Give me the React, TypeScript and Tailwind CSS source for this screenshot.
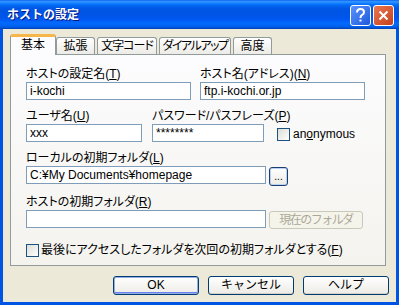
import React from 'react';

const font = "font-[family-name:'Liberation_Sans','Noto_Sans_CJK_JP',sans-serif]";

function Label({ text, keyChar, className = '' }: { text: string; keyChar: string; className?: string }) {
  return (
    <div className={`h-[15px] leading-[15px] text-[12px] text-black whitespace-nowrap [font-feature-settings:'palt'] ${className}`}>
      {text}(<u>{keyChar}</u>)
    </div>
  );
}

function TextBox({ value, w }: { value: string; w: string }) {
  return (
    <div className={`${w} h-[18px] border border-[#7F9DB9] bg-white px-[3px] text-[12px] leading-[16px] text-black whitespace-nowrap overflow-hidden`}>
      {value}
    </div>
  );
}

function CheckBox() {
  return <div className="w-[13px] h-[13px] shrink-0 border border-[#1C5180] bg-gradient-to-br from-[#DCDCD7] to-white" />;
}

function Tab({ label, w, active = false, tight = '' }: { label: string; w: string; active?: boolean; tight?: string }) {
  if (active) {
    return (
      <div className={`relative z-10 ${w} h-[21px] mb-[-1px] rounded-t-[3px] border-x border-[#919B9C] bg-[#FCFCFE] border-t-[3px] border-t-[#F7B64A] flex justify-center whitespace-nowrap leading-[16px]`}>
        {label}
      </div>
    );
  }
  return (
    <div className={`${w} h-[17px] rounded-t-[3px] border border-b-0 border-[#919B9C] bg-gradient-to-b from-white to-[#ECEBE6] flex justify-center whitespace-nowrap leading-[16px] [font-feature-settings:'palt'] ${tight}`}>
      {label}
    </div>
  );
}

function XpButton({ label, isDefault = false }: { label: string; isDefault?: boolean }) {
  return (
    <button
      className={`w-[86px] h-[19px] rounded-[3px] border border-[#003C74] bg-gradient-to-b from-white to-[#ECEBE6] text-[12px] leading-[15px] text-black ${
        isDefault ? 'shadow-[inset_0_0_0_1px_#97AEE2,inset_0_-1px_0_1px_#6982EE]' : 'shadow-[inset_0_-1px_0_#D6D0C5]'
      }`}
    >
      {label}
    </button>
  );
}

export default function App() {
  return (
    <div className={`w-[399px] h-[305px] flex flex-col bg-[#0054E3] ${font}`}>
      {/* タイトルバー */}
      <div className="h-[29px] shrink-0 flex items-center pl-[7px] pr-[5px] bg-[linear-gradient(to_bottom,#0058ee_0%,#3593ff_4%,#288eff_8%,#127dff_12%,#036ffc_16%,#0262ee_22%,#0057e5_30%,#0054e3_40%,#0055eb_60%,#005bf5_70%,#026afe_80%,#0062ef_90%,#0052d6_96%,#0040ab_100%)]">
        <span className="flex-1 text-white font-bold text-[12px] leading-[14px] pt-[1px] [text-shadow:1px_1px_0_#0A1883]">ホストの設定</span>
        <div className="flex gap-[2px] mt-[1px]">
          <div className="w-[21px] h-[21px] rounded-[3px] border border-white bg-gradient-to-br from-[#5A93FF] to-[#1C59DA] flex items-center justify-center">
            <svg width="11" height="15" viewBox="0 0 11 15">
              <path d="M2 4.5 C2 2 3.6 1 5.5 1 C7.6 1 9 2.3 9 4.2 C9 6 7.6 6.6 6.5 7.4 C5.8 7.9 5.5 8.5 5.5 10" fill="none" stroke="white" strokeWidth="2" />
              <rect x="4.5" y="11.5" width="2" height="2" fill="white" />
            </svg>
          </div>
          <div className="w-[21px] h-[21px] rounded-[3px] border border-white bg-gradient-to-br from-[#E9774F] to-[#C3401A] flex items-center justify-center">
            <svg width="11" height="11" viewBox="0 0 11 11">
              <path d="M1.5 1.5 L9.5 9.5 M9.5 1.5 L1.5 9.5" stroke="white" strokeWidth="2" />
            </svg>
          </div>
        </div>
      </div>

      {/* 本体 */}
      <div className="flex-1 mx-[3px] mb-[3px] bg-[#ECE9D8] flex flex-col px-[7px] pt-[5px]">
        {/* タブ */}
        <div className="h-[20px] flex items-end text-[12px] text-black">
          <Tab label="基本" w="w-[46px]" active />
          <Tab label="拡張" w="w-[39px]" />
          <div className="w-[2px]" />
          <Tab label="文字コード" w="w-[60px]" tight="tracking-[-1px]" />
          <div className="w-[2px]" />
          <Tab label="ダイアルアップ" w="w-[72px]" tight="tracking-[-1.5px]" />
          <div className="w-[2px]" />
          <Tab label="高度" w="w-[39px]" />
        </div>

        {/* パネル */}
        <div className="h-[212px] mr-[3px] border border-[#919B9C] bg-gradient-to-b from-[#FCFCFE] to-[#F4F3EE] pl-[15px] pt-[12px] flex flex-col gap-[9px]">
          <div className="flex gap-[9px]">
            <div className="flex flex-col">
              <Label text="ホストの設定名" keyChar="T" />
              <TextBox value="i-kochi" w="w-[165px]" />
            </div>
            <div className="flex flex-col">
              <Label text="ホスト名(アドレス)" keyChar="N" />
              <TextBox value="ftp.i-kochi.or.jp" w="w-[165px]" />
            </div>
          </div>

          <div className="flex">
            <div className="flex flex-col w-[116px]">
              <Label text="ユーザ名" keyChar="U" />
              <TextBox value="xxx" w="w-[116px]" />
            </div>
            <div className="flex flex-col ml-[10px] w-[112px]">
              <Label text="パスワード/パスフレーズ" keyChar="P" />
              <TextBox value="********" w="w-[112px]" />
            </div>
            <div className="self-end ml-[13px] mb-[1px] flex items-center gap-[3px] text-[12px] leading-[13px]">
              <CheckBox />
              <span>
                an<u>o</u>nymous
              </span>
            </div>
          </div>

          <div className="flex flex-col">
            <Label text="ローカルの初期フォルダ" keyChar="L" />
            <div className="flex gap-[3px] items-start">
              <TextBox value="C:¥My Documents¥homepage" w="w-[240px]" />
              <button className="mt-[1px] w-[19px] h-[19px] rounded-[3px] border border-[#1C3F70] bg-gradient-to-b from-white to-[#ECEBE6] shadow-[inset_0_0_0_1px_#B9D1F5] text-[10px] leading-[16px] text-black">
                ...
              </button>
            </div>
          </div>

          <div className="flex flex-col">
            <Label text="ホストの初期フォルダ" keyChar="R" />
            <div className="flex gap-[3px] items-start">
              <TextBox value="" w="w-[240px]" />
              <button className="mt-[1px] w-[94px] h-[18px] rounded-[3px] border border-[#CAC8BB] bg-[#F5F4EA] text-[12px] leading-[15px] text-[#ACA899] tracking-[-1.5px]">
                現在のフォルダ
              </button>
            </div>
          </div>

          <div className="mt-[5px] flex items-center gap-[2px] text-[12px] leading-[14px] [font-feature-settings:'palt']">
            <CheckBox />
            <span>
              最後にアクセスしたフォルダを次回の初期フォルダとする(<u>F</u>)
            </span>
          </div>
        </div>

        {/* ボタン */}
        <div className="mt-[10px] flex justify-end gap-[9px]">
          <XpButton label="OK" isDefault />
          <XpButton label="キャンセル" />
          <XpButton label="ヘルプ" />
        </div>
      </div>
    </div>
  );
}
